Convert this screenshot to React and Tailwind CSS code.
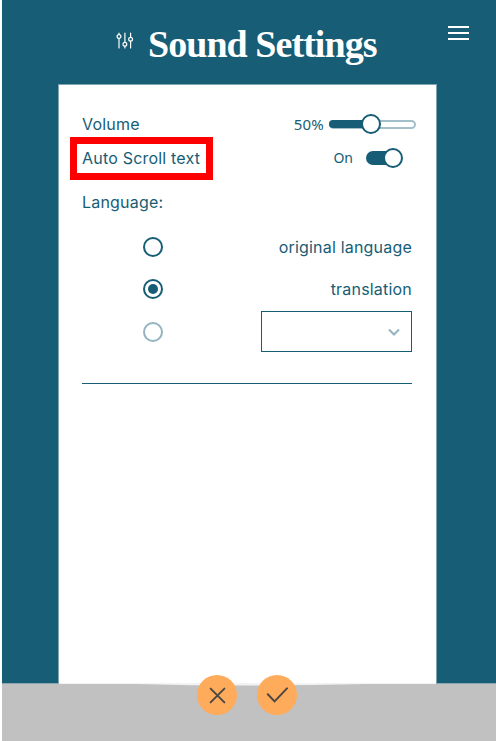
function SlidersIcon() {
  return (
    <svg width="18" height="18" viewBox="0 0 18 18" fill="none" stroke="#fff" strokeWidth="1.2" strokeLinecap="round">
      <path d="M3 1v1.5M3 6.5v9.5M8.9 1v9M8.9 14v2M14.6 1v4.2M14.6 9.2v6.8" />
      <circle cx="3" cy="4.5" r="1.9" />
      <circle cx="8.9" cy="12.2" r="1.9" />
      <circle cx="14.6" cy="7.2" r="1.9" />
    </svg>
  );
}

function Radio({ checked, muted }) {
  return (
    <span
      className={
        "ml-[61px] flex size-5 items-center justify-center rounded-full border-2 " +
        (muted ? "border-[#93b3bf]" : "border-[#165d75]")
      }
    >
      {checked && <span className="size-[10px] rounded-full bg-[#165d75]" />}
    </span>
  );
}

export default function App() {
  return (
    <div className="flex h-[741px] w-[496px] flex-col overflow-hidden border-l-2 border-white bg-[#165d75] font-['Inter',sans-serif] text-base leading-5 text-[#165d75]">
      <header className="flex h-[84px] shrink-0 items-start pl-[114px] pr-[27px]">
        <div className="mt-8"><SlidersIcon /></div>
        <h1 className="ml-[14px] mt-[22px] whitespace-nowrap font-['Liberation_Serif',serif] text-[38px] font-bold leading-[44px] tracking-[-0.95px] text-white">
          Sound Settings
        </h1>
        <button className="ml-auto mt-[26px] flex w-[21px] flex-col gap-1" aria-label="Menu">
          <span className="h-[2px] w-full bg-white" />
          <span className="h-[2px] w-full bg-white" />
          <span className="h-[2px] w-full bg-white" />
        </button>
      </header>

      <main className="ml-[56px] h-[599px] w-[379px] shrink-0 border border-b-0 border-[#7fa3b0] bg-white pl-[23px] pr-5 pt-[29px]">
        <div className="flex h-5 items-center justify-between">
          <span className="tracking-[0.2px]">Volume</span>
          <div className="flex items-center">
            <span className="mr-[5px] font-['Noto_Sans',sans-serif] text-[15px] tracking-[0.2px]">50%</span>
            <div className="relative flex h-5 w-[87px] items-center">
              <span className="h-[9px] w-full rounded-full border-2 border-[#a3bfc9]" />
              <span className="absolute left-0 h-2 w-10 rounded-full bg-[#165d75]" />
              <span className="absolute left-8 size-5 rounded-full border-2 border-[#165d75] bg-white" />
            </div>
          </div>
        </div>

        <div className="relative mt-[14px] flex h-5 items-center justify-between pr-[13px]">
          <span className="tracking-[0.2px]">Auto Scroll text</span>
          <span className="absolute -left-3 -top-[11px] h-[43px] w-[143px] border-[7px] border-[#ff0000]" />
          <div className="flex items-center">
            <span className="mr-[13px] font-['Noto_Sans',sans-serif] text-[14px]">On</span>
            <div className="relative flex h-5 w-[37px] items-center">
              <span className="h-[14px] w-8 rounded-full bg-[#165d75]" />
              <span className="absolute right-0 size-5 rounded-full border-2 border-[#165d75] bg-white" />
            </div>
          </div>
        </div>

        <div className="mt-6 tracking-[0.2px]">Language:</div>

        <div className="mr-1 mt-[25px] flex h-5 items-center justify-between">
          <Radio />
          <span className="tracking-[0.2px]">original language</span>
        </div>
        <div className="mr-1 mt-[22px] flex h-5 items-center justify-between">
          <Radio checked />
          <span className="tracking-[0.2px]">translation</span>
        </div>
        <div className="mr-1 mt-3 flex h-[41px] items-center justify-between">
          <Radio muted />
          <div className="flex h-[41px] w-[151px] items-center justify-end border border-[#165d75] pr-[11px]">
            <svg width="12" height="8" viewBox="0 0 12 8" fill="none" stroke="#93b3bf" strokeWidth="2">
              <path d="M1 1.5 6 6.5 11 1.5" />
            </svg>
          </div>
        </div>
        <hr className="mr-1 mt-[31px] border-[#165d75]" />
      </main>

      <footer className="relative flex h-[58px] shrink-0 justify-center gap-5 border-t border-[#8aa7b0] bg-[#c1c1c1] pr-1">
        <svg className="absolute left-[57px] -top-px" width="377" height="4" viewBox="0 0 377 4">
          <path d="M0 0H377V1H308Q189 4 78 1H0Z" fill="#f3f3f3" />
        </svg>
        <button className="relative -mt-[9px] flex size-10 items-center justify-center rounded-full bg-[#ffab5c]" aria-label="Cancel">
          <svg width="17" height="17" viewBox="0 0 18 18" fill="none" stroke="#4b4740" strokeWidth="2" strokeLinecap="round">
            <path d="M1.7 1.7 16.3 16.3M16.3 1.7 1.7 16.3" />
          </svg>
        </button>
        <button className="relative -mt-[9px] flex size-10 items-center justify-center rounded-full bg-[#ffab5c]" aria-label="Confirm">
          <svg width="22" height="16" viewBox="0 0 22 16" fill="none" stroke="#4b4740" strokeWidth="2" strokeLinecap="round">
            <path d="M1.8 7.2 8.6 14.4 21 1.4" />
          </svg>
        </button>
      </footer>
    </div>
  );
}
